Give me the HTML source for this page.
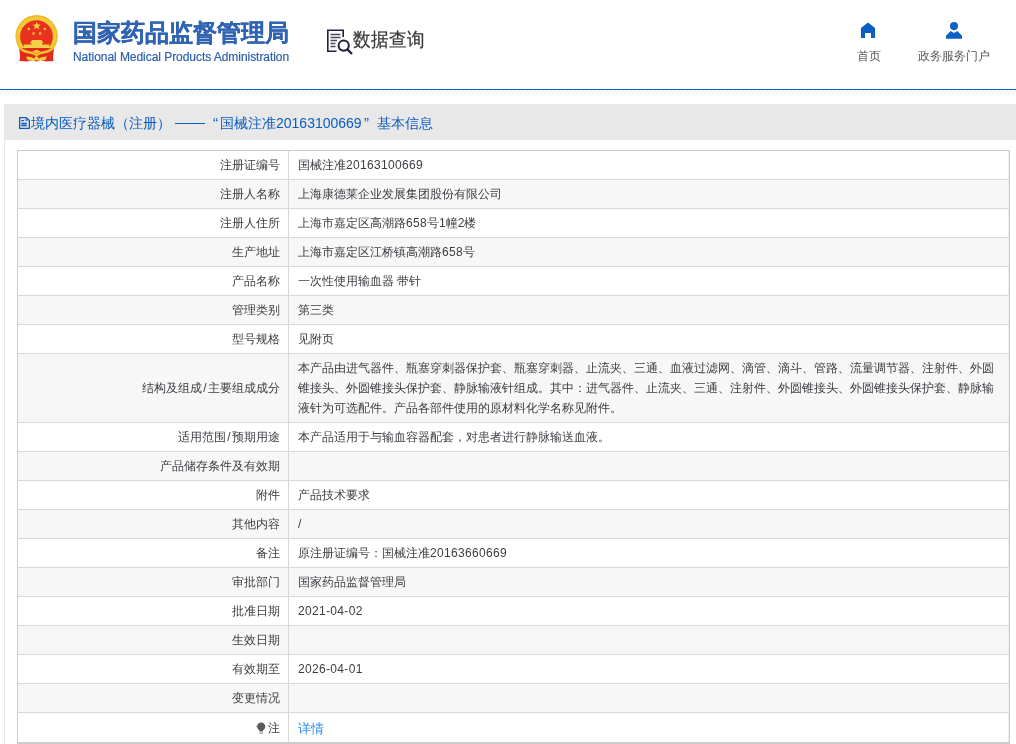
<!DOCTYPE html>
<html><head><meta charset="utf-8">
<style>
*{margin:0;padding:0;box-sizing:border-box}
html,body{width:1016px;height:744px;overflow:hidden;background:#fff}
#tbl,.bt,.nav,#t1,#t2,#stext{will-change:transform}
body{font-family:"Liberation Sans",sans-serif;font-size:12px;color:#3c3d42;position:relative}
.abs{position:absolute}
#t1{left:73px;top:18px;font-size:24px;font-weight:bold;-webkit-text-stroke:0.25px #3063b4;color:#3063b4;line-height:30px;white-space:nowrap}
#t2{left:73px;top:49px;font-size:12px;letter-spacing:-0.05px;color:#2d5fae;-webkit-text-stroke:0.2px #2d5fae;line-height:16px;white-space:nowrap}
#sicon{left:325px;top:27px;width:30px;height:30px}
#stext{left:353px;top:26px;font-size:18px;color:#3a3a3a;line-height:26px;white-space:nowrap;-webkit-text-stroke:0.25px #3a3a3a;transform:scaleY(1.08);transform-origin:0 4px}
.nav{font-size:12px;color:#555;line-height:16px;white-space:nowrap}
#navhome{left:857px;top:48px}
#navgw{left:918px;top:48px}
#blue{left:0;top:89px;width:1016px;height:1px;background:#0a5cc2}
#hatch{left:0;top:90px;width:1016px;height:4px;background:repeating-linear-gradient(135deg,#fff 0,#fff 2px,#dcdcdc 2px,#dcdcdc 3px)}
#sec{left:4px;top:104px;width:1012px;height:640px;border-left:1px solid #e6e6e6}
#bar{left:4px;top:104px;width:1012px;height:35px;background:#e8e8e8}
.bt{top:114px;font-size:14px;color:#0a5cc2;line-height:18px;white-space:nowrap}
#docicon{left:19px;top:117px;width:11px;height:13px}
#tbl{left:17px;top:150px;width:993px;border:1px solid #ccc;border-bottom:2px solid #ccc}
.row{display:flex;height:29px;border-bottom:1px solid #d8d8d8;background:#fff}
.row.g{background:#f7f7f7}
.row:last-child{border-bottom:none}
.lab{width:271px;border-right:1px solid #d8d8d8;text-align:right;padding-right:8px;display:flex;align-items:center;justify-content:flex-end;white-space:nowrap}
.val{flex:1;padding-left:9px;display:flex;align-items:center;white-space:nowrap;border-right:1px solid #eceef2}
.val.multi{white-space:normal;line-height:20px;padding-right:14px}
.d{letter-spacing:.33px}
.sl{display:inline-block;width:6px;text-align:center}
a{color:#2f8bef;text-decoration:none;font-size:13px}
</style></head><body>

<svg class="abs" style="left:0;top:0" width="70" height="70" viewBox="0 0 70 70">
  <circle cx="36.6" cy="36.2" r="21.2" fill="#f0b92a"/>
  <circle cx="36.6" cy="36.2" r="19.8" fill="#f5c935"/>
  <circle cx="36.5" cy="36.6" r="16.4" fill="#e8311f"/>
  <polygon points="36.7,21.8 37.8,24.6 40.8,24.7 38.5,26.5 39.3,29.4 36.7,27.7 34.1,29.4 34.9,26.5 32.6,24.7 35.6,24.6" fill="#f7d23c"/>
  <polygon points="28.8,27 29.4,28.2 30.7,28.3 29.7,29.1 30,30.4 28.8,29.7 27.6,30.4 27.9,29.1 26.9,28.3 28.2,28.2" fill="#f7d23c"/>
  <polygon points="44.9,27 45.5,28.2 46.8,28.3 45.8,29.1 46.1,30.4 44.9,29.7 43.7,30.4 44,29.1 43,28.3 44.3,28.2" fill="#f7d23c"/>
  <polygon points="33.5,31.5 34.1,32.7 35.4,32.8 34.4,33.6 34.7,34.9 33.5,34.2 32.3,34.9 32.6,33.6 31.6,32.8 32.9,32.7" fill="#f7d23c"/>
  <polygon points="40.1,31.5 40.7,32.7 42,32.8 41,33.6 41.3,34.9 40.1,34.2 38.9,34.9 39.2,33.6 38.2,32.8 39.5,32.7" fill="#f7d23c"/>
  <path d="M32 40 L41.5 40 L43.5 43.3 L30 43.3 Z M31.5 43.3 L42 43.3 L42 44.4 L31.5 44.4 Z M23.7 44.4 L49.3 44.4 L49.3 48 L23.7 48 Z" fill="#f5cf4a"/>
  <path d="M19.2 48.5 Q20 47.5 21 48.2 L52 48.2 Q53 47.5 54 48.5 L53 57 L53.5 61 L46 61.5 L40 60 L36.5 61.8 L33 60 L27 61.5 L19.5 61 L20.2 57 Z" fill="#e12a1d"/>
  <path d="M17.5 44 Q21 49.5 29 51 Q33.5 51.8 36.5 54.3 Q39.5 51.8 44 51 Q52 49.5 55.5 44 L55 47 Q52 52.5 44 53.6 Q39.5 54.3 36.5 56.2 Q33.5 54.3 29 53.6 Q21 52.5 18 47 Z" fill="#f4c62c"/>
  <path d="M32 51.5 L36.5 49.8 L41 51.5 L36.5 54 Z" fill="#f4c62c"/>
  <path d="M26 56.5 L31 57 L34 58.6 L36.5 55.6 L39 58.6 L42 57 L47 56.5 L45.2 60.2 L40 60.3 L36.5 60.6 L33 60.3 L27.8 60.2 Z" fill="#f4cd38"/>
</svg>
<div id="t1" class="abs">国家药品监督管理局</div>
<div id="t2" class="abs">National Medical Products Administration</div>

<svg id="sicon" class="abs" viewBox="0 0 30 30" fill="none" stroke="#22233a">
  <path d="M11.5 24.2 H2.8 V3.3 H18.2 V10" stroke-width="1.6"/>
  <path d="M5.5 7.5 H15.5 M5.5 10.5 H15.5 M5.5 13.5 H12 M5.5 16.5 H10.5 M5.5 19.5 H10.5" stroke-width="1.4" stroke="#4a4a5a"/>
  <circle cx="18.7" cy="18.6" r="5.1" stroke-width="2"/>
  <path d="M22.5 22.5 L27 27" stroke-width="2.4"/>
</svg>
<div id="stext" class="abs">数据查询</div>

<svg class="abs" style="left:860px;top:22px" width="16" height="17" viewBox="0 0 16 17">
  <path d="M1 6 L8 0.5 L15 6 V16 H11 V11 H5 V16 H1 Z" fill="#0b5dc6"/>
</svg>
<div id="navhome" class="abs nav">首页</div>
<svg class="abs" style="left:945px;top:21px" width="18" height="18" viewBox="0 0 18 18">
  <circle cx="9" cy="5" r="4" fill="#0b5fc8"/><path d="M8 8.5 L9 9.8 L10 8.5 Z" fill="#0b5fc8"/>
  <path d="M1 14.7 L5.7 10 L9 12 L12.3 10 L17 14.7 V17.8 H1 Z" fill="#0b5fc8"/>
</svg>
<div id="navgw" class="abs nav">政务服务门户</div>

<div id="blue" class="abs"></div>
<svg class="abs" style="left:0;top:90px" width="1016" height="4"><defs><pattern id="hp" width="4" height="4" patternUnits="userSpaceOnUse"><rect x="3" y="0" width="1" height="1" fill="#fbf3e6"/><rect x="2" y="1" width="1" height="1" fill="#ebebeb"/><rect x="1" y="2" width="1" height="1" fill="#e6e6e6"/><rect x="0" y="3" width="1" height="1" fill="#e0e0e0"/></pattern></defs><rect width="1016" height="4" fill="url(#hp)"/></svg>

<div id="sec" class="abs"></div>
<div id="bar" class="abs"></div>
<div class="abs" style="left:4px;top:139px;width:1012px;height:1px;background:#e9ebf3"></div>
<svg id="docicon" class="abs" viewBox="0 0 11 13" fill="none" stroke="#0a5cc2" stroke-width="1.3">
  <path d="M0.65 0.65 H7.2 L10.35 3.6 V11.45 H0.65 Z"/>
  <path d="M2.3 3.6 H4.9 M2.3 6.5 H7.8 M2.3 8.5 H7.8"/>
  <circle cx="7.4" cy="2.9" r="0.9" stroke-width="0.9"/>
</svg>
<div class="abs bt" style="left:31px">境内医疗器械（注册）</div>
<div class="abs" style="left:175px;top:123px;width:30px;height:1px;background:#0a5cc2"></div>
<div class="abs bt lat" style="left:213px;font-size:15px">“</div>
<div class="abs bt" style="left:220px">国械注准</div>
<div class="abs bt lat" style="left:276px">20163100669</div>
<div class="abs bt lat" style="left:364px;font-size:15px">”</div>
<div class="abs bt" style="left:377px">基本信息</div>

<div id="tbl" class="abs">
  <div class="row"><div class="lab">注册证编号</div><div class="val">国械注准<span class="d">20163100669</span></div></div>
  <div class="row g"><div class="lab">注册人名称</div><div class="val">上海康德莱企业发展集团股份有限公司</div></div>
  <div class="row"><div class="lab">注册人住所</div><div class="val">上海市嘉定区高潮路<span class="d">658</span>号1幢2楼</div></div>
  <div class="row g"><div class="lab">生产地址</div><div class="val">上海市嘉定区江桥镇高潮路<span class="d">658</span>号</div></div>
  <div class="row"><div class="lab">产品名称</div><div class="val">一次性使用输血器 带针</div></div>
  <div class="row g"><div class="lab">管理类别</div><div class="val">第三类</div></div>
  <div class="row"><div class="lab">型号规格</div><div class="val">见附页</div></div>
  <div class="row g" style="height:69px"><div class="lab">结构及组成<span class="sl">/</span>主要组成成分</div><div class="val multi">本产品由进气器件、瓶塞穿刺器保护套、瓶塞穿刺器、止流夹、三通、血液过滤网、滴管、滴斗、管路、流量调节器、注射件、外圆锥接头、外圆锥接头保护套、静脉输液针组成。其中：进气器件、止流夹、三通、注射件、外圆锥接头、外圆锥接头保护套、静脉输液针为可选配件。产品各部件使用的原材料化学名称见附件。</div></div>
  <div class="row"><div class="lab">适用范围<span class="sl">/</span>预期用途</div><div class="val">本产品适用于与输血容器配套，对患者进行静脉输送血液。</div></div>
  <div class="row g"><div class="lab">产品储存条件及有效期</div><div class="val"></div></div>
  <div class="row"><div class="lab">附件</div><div class="val">产品技术要求</div></div>
  <div class="row g"><div class="lab">其他内容</div><div class="val">/</div></div>
  <div class="row"><div class="lab">备注</div><div class="val">原注册证编号：国械注准<span class="d">20163660669</span></div></div>
  <div class="row g"><div class="lab">审批部门</div><div class="val">国家药品监督管理局</div></div>
  <div class="row"><div class="lab">批准日期</div><div class="val"><span class="d">2021-04-02</span></div></div>
  <div class="row g"><div class="lab">生效日期</div><div class="val"></div></div>
  <div class="row"><div class="lab">有效期至</div><div class="val"><span class="d">2026-04-01</span></div></div>
  <div class="row g"><div class="lab">变更情况</div><div class="val"></div></div>
  <div class="row" style="height:29px"><div class="lab" style="padding-top:2px"><svg width="10" height="12" viewBox="0 0 10 12" style="margin-right:2px;margin-top:-1px"><path d="M5.2 0.5 C7.6 0.5 9.3 2.3 9.3 4.6 C9.3 6.5 8.1 7.7 7 8.4 L7 9.6 L3.4 9.6 L3.4 8.4 C2.3 7.7 1.1 6.5 1.1 4.6 C1.1 2.3 2.8 0.5 5.2 0.5 Z" fill="#5a5a5f"/><rect x="3.5" y="10.6" width="3.4" height="1" fill="#77777c"/><rect x="0" y="4" width="1.2" height="1" fill="#999"/></svg>注</div><div class="val" style="padding-top:2px"><a>详情</a></div></div>
</div>

</body></html>
